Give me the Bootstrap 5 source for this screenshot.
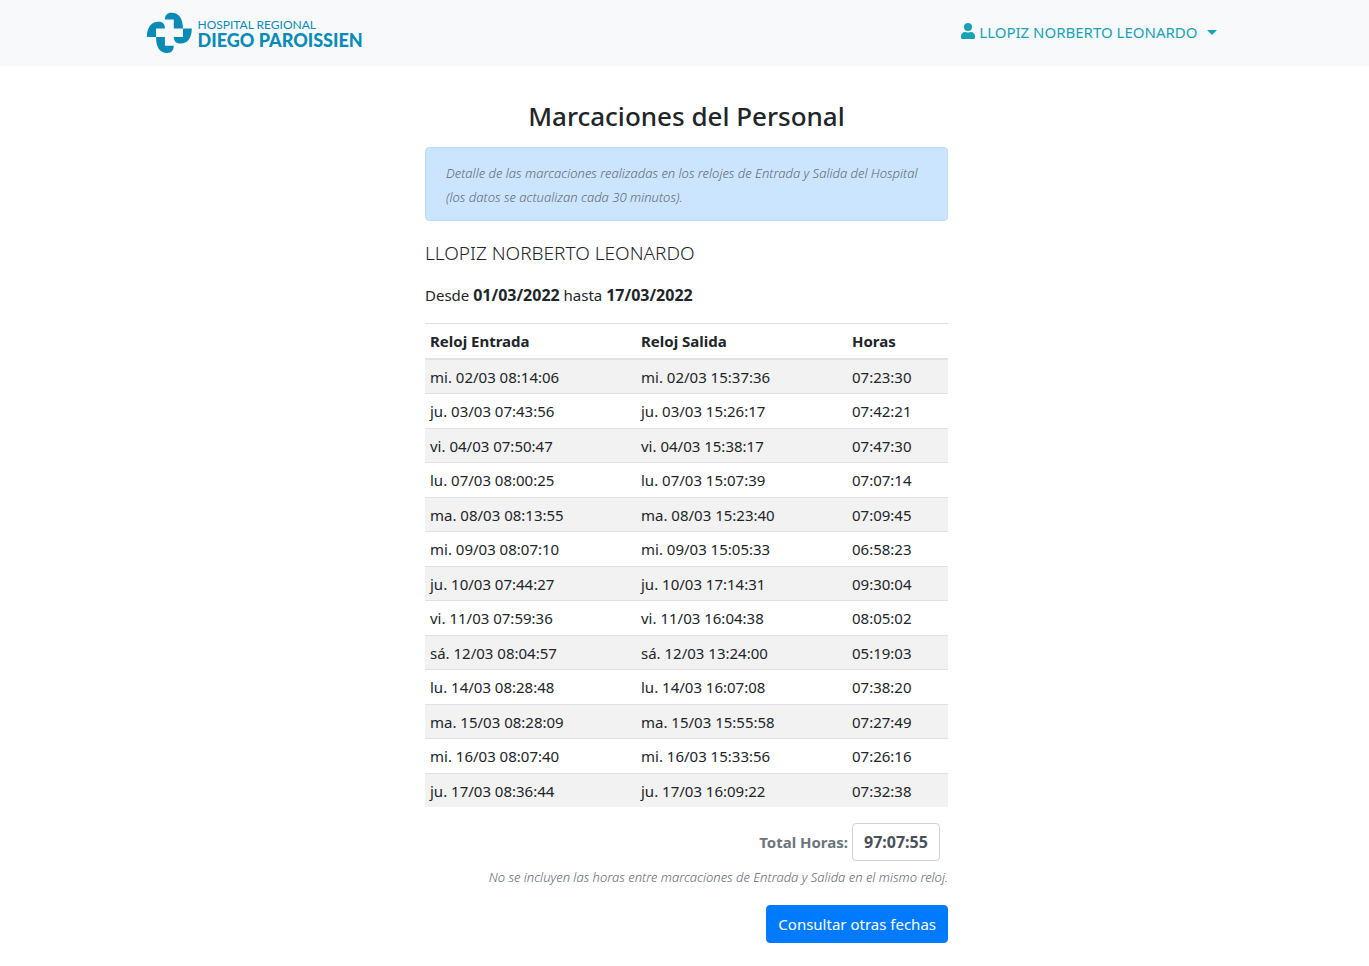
<!DOCTYPE html>
<html lang="es">
<head>
<meta charset="utf-8">
<meta name="viewport" content="width=device-width, initial-scale=1">
<title>Marcaciones del Personal</title>
<link href="https://cdn.jsdelivr.net/npm/bootstrap@5.3.0/dist/css/bootstrap.min.css" rel="stylesheet">
<style>
  body { font-family: "Noto Sans", "Open Sans", sans-serif; font-size: 15px; line-height: 24px; color: #212529; }
  .top-bar { background: #f8f9fa; height: 66px; }
  .top-inner { max-width: 1078px; padding-right: 7px; }
  .brand { color: #098bb8; font-family: Lato, sans-serif; gap: 5px; }
  .brand svg { width: 47px; height: 42px; }
  .brand-top { font-size: 12px; line-height: 14px; }
  .brand-name { font-size: 18px; line-height: 16px; font-weight: 900; }
  .user-menu, .user-menu:hover { color: #17a2b8; font-size: 15px; padding-bottom: 2px; }
  .user-menu svg { width: 14px; height: 16px; vertical-align: -1px; }
  .user-menu::after { margin-left: 9px; vertical-align: 3px; border-width: 5px 5px 0; }
  .sheet { max-width: 523px; }
  h1 { font-size: 26px; line-height: 36px; font-weight: 500; margin-bottom: 13px; }
  .notice { background: #cce5ff; border: 1px solid #b8daff; border-radius: 4px; padding: 13px 20px 11px; }
  .note { font-size: 13px; font-weight: 300; font-style: italic; color: #5f6972; }
  .person { font-size: 19px; line-height: 24px; font-weight: 300; margin-bottom: 18px; }
  .period strong { font-size: 16px; }
  .marks { --bs-table-striped-bg: #f2f2f2; color: #212529; table-layout: fixed; }
  .marks th, .marks td { border: 0 solid #dee2e6; border-top-width: 1px; padding: 5px 5px 4px; }
  .marks th, .marks tbody tr:nth-child(even) td { padding-bottom: 5px; }
  .marks thead th { border-bottom-width: 2px; }
  .marks tbody tr:first-child td { border-top-width: 0; }
  .total-label { color: #6c757d; font-weight: 700; }
  .total-box { width: 88px; height: 38px; padding: 6px 11px; font-size: 16px; font-weight: 700; color: #495057; border-color: #ced4da; border-radius: 4px; }
  .btn-query { --bs-btn-bg: #007bff; --bs-btn-border-color: #007bff; --bs-btn-border-radius: 4px; --bs-btn-font-size: 15px; --bs-btn-line-height: 24px; --bs-btn-padding-x: 11px; }
</style>
</head>
<body>
<nav class="top-bar d-flex align-items-center px-3">
  <div class="top-inner w-100 mx-auto d-flex align-items-center justify-content-between">
    <a class="brand d-flex align-items-center text-decoration-none" href="#">
      <svg viewBox="20 34 142 128" fill="#098bb8" aria-hidden="true">
        <path d="M77 57C77 43 84 36 97 36C119 36 132 53 132 84H104V57Z"/>
        <path d="M132 84H159C159 114 145 130 125 130C114 130 104 125 104 110H132Z"/>
        <path d="M104 137C104 151 97 159 84 159C62 159 50 142 50 110H77V137Z"/>
        <path d="M50 110H22C22 81 36 64 57 64C69 64 77 69 77 84H50Z"/>
      </svg>
      <span class="d-flex flex-column">
        <span class="brand-top">HOSPITAL REGIONAL</span>
        <span class="brand-name">DIEGO PAROISSIEN</span>
      </span>
    </a>
    <a class="user-menu dropdown-toggle text-decoration-none" href="#" role="button" data-bs-toggle="dropdown">
      <svg viewBox="0 0 448 512" fill="currentColor" aria-hidden="true"><path d="M224 256a128 128 0 1 0 0-256 128 128 0 0 0 0 256zm90 32h-17a174 174 0 0 1-146 0h-17C60 288 0 348 0 422v42c0 26 22 48 48 48h352c26 0 48-22 48-48v-42c0-74-60-134-134-134z"/></svg>
      LLOPIZ NORBERTO LEONARDO</a>
  </div>
</nav>
<main class="ps-1">
  <div class="sheet mx-auto pt-4">
    <h1 class="text-center mt-2">Marcaciones del Personal</h1>
    <div class="notice note">Detalle de las marcaciones realizadas en los relojes de Entrada y Salida del Hospital<br>(los datos se actualizan cada 30 minutos).</div>
    <h2 class="person mt-3 pt-1">LLOPIZ NORBERTO LEONARDO</h2>
    <p class="period mb-3">Desde <strong>01/03/2022</strong> hasta <strong>17/03/2022</strong></p>
    <table class="table table-striped marks mb-3">
      <colgroup><col style="width:211px"><col style="width:211px"><col></colgroup>
      <thead><tr><th scope="col">Reloj Entrada</th><th scope="col">Reloj Salida</th><th scope="col">Horas</th></tr></thead>
      <tbody>
        <tr><td>mi. 02/03 08:14:06</td><td>mi. 02/03 15:37:36</td><td>07:23:30</td></tr>
        <tr><td>ju. 03/03 07:43:56</td><td>ju. 03/03 15:26:17</td><td>07:42:21</td></tr>
        <tr><td>vi. 04/03 07:50:47</td><td>vi. 04/03 15:38:17</td><td>07:47:30</td></tr>
        <tr><td>lu. 07/03 08:00:25</td><td>lu. 07/03 15:07:39</td><td>07:07:14</td></tr>
        <tr><td>ma. 08/03 08:13:55</td><td>ma. 08/03 15:23:40</td><td>07:09:45</td></tr>
        <tr><td>mi. 09/03 08:07:10</td><td>mi. 09/03 15:05:33</td><td>06:58:23</td></tr>
        <tr><td>ju. 10/03 07:44:27</td><td>ju. 10/03 17:14:31</td><td>09:30:04</td></tr>
        <tr><td>vi. 11/03 07:59:36</td><td>vi. 11/03 16:04:38</td><td>08:05:02</td></tr>
        <tr><td>sá. 12/03 08:04:57</td><td>sá. 12/03 13:24:00</td><td>05:19:03</td></tr>
        <tr><td>lu. 14/03 08:28:48</td><td>lu. 14/03 16:07:08</td><td>07:38:20</td></tr>
        <tr><td>ma. 15/03 08:28:09</td><td>ma. 15/03 15:55:58</td><td>07:27:49</td></tr>
        <tr><td>mi. 16/03 08:07:40</td><td>mi. 16/03 15:33:56</td><td>07:26:16</td></tr>
        <tr><td>ju. 17/03 08:36:44</td><td>ju. 17/03 16:09:22</td><td>07:32:38</td></tr>
      </tbody>
    </table>
    <div class="d-flex justify-content-end align-items-center gap-1 pe-2">
      <label class="total-label" for="total">Total Horas:</label>
      <input class="form-control total-box" id="total" type="text" value="97:07:55">
    </div>
    <p class="note text-end mt-1 mb-3">No se incluyen las horas entre marcaciones de Entrada y Salida en el mismo reloj.</p>
    <div class="text-end pb-4"><button type="button" class="btn btn-primary btn-query">Consultar otras fechas</button></div>
  </div>
</main>
<script src="https://cdn.jsdelivr.net/npm/bootstrap@5.3.0/dist/js/bootstrap.bundle.min.js"></script>
</body>
</html>
